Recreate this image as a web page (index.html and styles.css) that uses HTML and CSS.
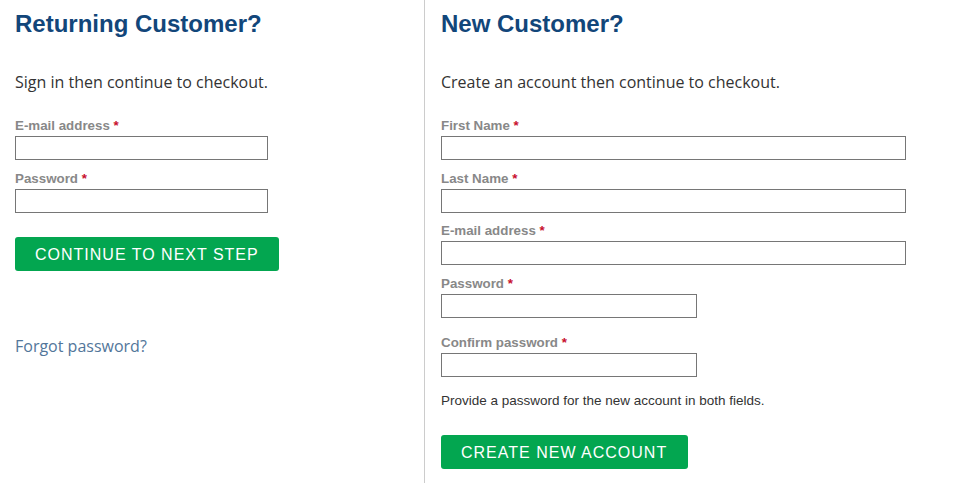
FILE: index.html
```html
<!DOCTYPE html>
<html lang="en">
<head>
<meta charset="utf-8">
<title>Checkout sign in</title>
<link rel="stylesheet" href="styles.css">
</head>
<body>
<div class="page">
  <section class="col col-left">
    <h2 class="title">Returning Customer?</h2>
    <p class="intro">Sign in then continue to checkout.</p>
    <div class="field">
      <label class="label">E-mail address <span class="req">*</span></label>
      <input class="input input-left" type="text">
    </div>
    <div class="field">
      <label class="label">Password <span class="req">*</span></label>
      <input class="input input-left" type="password">
    </div>
    <button class="btn btn-continue" type="button">Continue to next step</button>
    <a class="forgot" href="#">Forgot password?</a>
  </section>
  <section class="col col-right">
    <h2 class="title">New Customer?</h2>
    <p class="intro">Create an account then continue to checkout.</p>
    <div class="field">
      <label class="label">First Name <span class="req">*</span></label>
      <input class="input input-wide" type="text">
    </div>
    <div class="field">
      <label class="label">Last Name <span class="req">*</span></label>
      <input class="input input-wide" type="text">
    </div>
    <div class="field">
      <label class="label">E-mail address <span class="req">*</span></label>
      <input class="input input-wide" type="text">
    </div>
    <div class="field field-pass">
      <label class="label">Password <span class="req">*</span></label>
      <input class="input input-mid" type="password">
    </div>
    <div class="field">
      <label class="label">Confirm password <span class="req">*</span></label>
      <input class="input input-mid" type="password">
    </div>
    <p class="help">Provide a password for the new account in both fields.</p>
    <button class="btn btn-create" type="button">Create new account</button>
  </section>
</div>
</body>
</html>
```

FILE: styles.css
```css
html, body {
  margin: 0;
  padding: 0;
  background: #ffffff;
}

.page {
  display: flex;
  align-items: stretch;
}

.col {
  box-sizing: border-box;
  display: flex;
  flex-direction: column;
  align-items: flex-start;
}

.col-left {
  width: 425px;
  padding-left: 15px;
  border-right: 1px solid #cccccc;
}

.col-right {
  padding-left: 16px;
  padding-bottom: 14px;
}

.title {
  margin: 10px 0 0;
  font-family: "Liberation Sans", Arial, sans-serif;
  font-weight: 700;
  font-size: 24px;
  line-height: 28px;
  color: #12467a;
}

.intro {
  margin: 33px 0 0;
  font-family: "Open Sans", sans-serif;
  font-size: 16px;
  line-height: 22px;
  color: #333333;
}

.field {
  margin-bottom: 8.5px;
}

.intro + .field {
  margin-top: 23px;
}

.field-pass {
  margin-bottom: 15px;
}

.label {
  display: block;
  padding-top: 1px;
  font-family: "Liberation Sans", Arial, sans-serif;
  font-weight: 700;
  font-size: 13.33px;
  line-height: 17px;
  color: #888888;
}

.req {
  color: #c8102e;
}

.input {
  display: block;
  box-sizing: border-box;
  margin: 2px 0 0;
  height: 24px;
  padding: 2px 4px;
  border: 1px solid #767676;
  border-radius: 0;
  background: #ffffff;
  font-family: "Liberation Sans", Arial, sans-serif;
  font-size: 13px;
}

.input-left {
  width: 253px;
}

.input-wide {
  width: 465px;
}

.input-mid {
  width: 256px;
}

.btn {
  box-sizing: border-box;
  height: 34px;
  padding: 2px 20px 0;
  border: none;
  border-radius: 3px;
  background: #03a650;
  color: #ffffff;
  font-family: "Liberation Sans", Arial, sans-serif;
  font-size: 16px;
  letter-spacing: 1px;
  text-transform: uppercase;
  cursor: pointer;
}

.btn-continue {
  margin-top: 16px;
}

.forgot {
  display: block;
  margin-top: 64px;
  font-family: "Open Sans", sans-serif;
  font-size: 16px;
  line-height: 22px;
  color: #52769a;
  text-decoration: none;
}

.help {
  margin: 8px 0 0;
  font-family: "Liberation Sans", Arial, sans-serif;
  font-size: 13.5px;
  line-height: 16px;
  color: #333333;
}

.btn-create {
  margin-top: 26px;
  padding: 2px 21px 0 20px;
}
```
